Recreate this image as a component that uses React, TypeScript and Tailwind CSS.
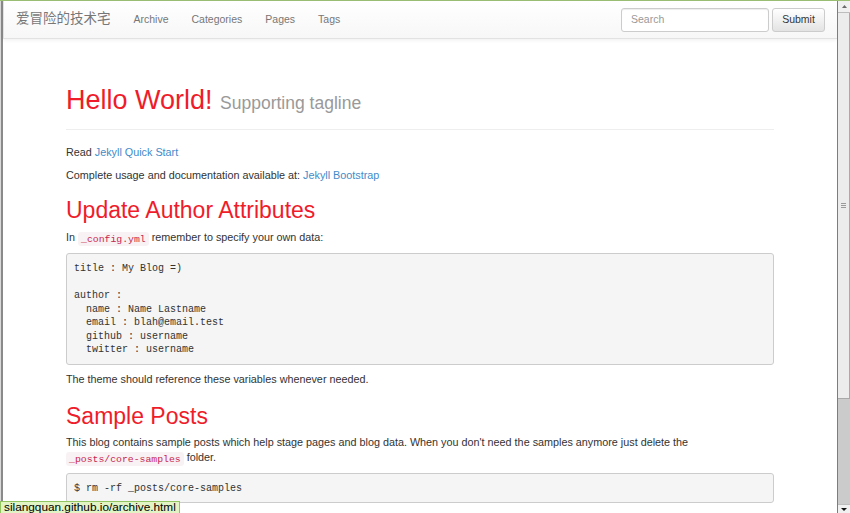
export default function App() {
  const mono = "font-['Liberation_Mono','DejaVu_Sans_Mono',monospace]";
  return (
    <div className="relative w-[850px] h-[513px] overflow-hidden bg-white flex flex-col font-['Liberation_Sans',Arial,sans-serif]">
      <div className="h-[1px] shrink-0 bg-[#9cc174]" />
      <div className="flex flex-1 min-h-0">
        <div className="w-[3px] shrink-0 bg-[#8a8a8a] border-l border-[#d9d9d9]" />
        <div className="flex-1 min-w-0 flex flex-col">
          <nav className="h-[38px] shrink-0 flex items-center pl-[12px] pr-[12px] border-b border-l border-[#e2e2e2] bg-gradient-to-b from-white to-[#f7f7f7] shadow-[0_1px_4px_rgba(0,0,0,0.07)]">
            <div className="flex items-center gap-[23px]">
              <span className="text-[13.5px] text-[#777] font-['Liberation_Sans','Noto_Sans_CJK_SC',sans-serif]">爱冒险的技术宅</span>
              <span className="text-[10.5px] text-[#777]">Archive</span>
              <span className="text-[10.5px] text-[#777]">Categories</span>
              <span className="text-[10.5px] text-[#777]">Pages</span>
              <span className="text-[10.5px] text-[#777]">Tags</span>
            </div>
            <div className="ml-auto flex items-center gap-[3px]">
              <div className="w-[148px] h-[24px] bg-white border border-[#ccc] rounded-[3px] shadow-[inset_0_1px_1px_rgba(0,0,0,0.075)] flex items-center pl-[9px] text-[10.5px] text-[#999]">
                Search
              </div>
              <div className="w-[53px] h-[24px] border border-[#ccc] rounded-[3px] bg-gradient-to-b from-white to-[#e3e3e3] flex items-center justify-center text-[10.5px] text-[#333]">
                Submit
              </div>
            </div>
          </nav>

          <div className="flex-1 min-h-0 pl-[63px]">
            <div className="w-[708px] flex flex-col text-[#333]">
              <div className="mt-[46px] pb-[14px] border-b border-[#eee]">
                <h1 className="h-[30px] leading-[30px] text-[27px] text-[#ef1c2b] whitespace-nowrap">
                  Hello World! <span className="text-[17.5px] leading-none text-[#999]">Supporting tagline</span>
                </h1>
              </div>
              <p className="mt-[15px] text-[10.8px] leading-[15px]">
                Read <span className="text-[#428bca]">Jekyll Quick Start</span>
              </p>
              <p className="mt-[7.5px] text-[10.8px] leading-[15px]">
                Complete usage and documentation available at: <span className="text-[#428bca]">Jekyll Bootstrap</span>
              </p>
              <h2 className="mt-[15px] text-[23px] leading-[24.75px] text-[#ef1c2b]">Update Author Attributes</h2>
              <p className="mt-[8px] text-[10.8px] leading-[15px]">
                In{" "}
                <code className={`${mono} text-[9.8px] leading-none text-[#c7254e] bg-[#f9f2f4] rounded-[3px] px-[3px] py-[1.5px]`}>_config.yml</code>{" "}
                remember to specify your own data:
              </p>
              <pre className={`${mono} mt-[8px] border border-[#ccc] rounded-[3px] bg-[#f5f5f5] pt-[8px] pb-[7px] px-[7px] text-[10px] leading-[13.5px] text-[#333] whitespace-pre`}>
{`title : My Blog =)

author :
  name : Name Lastname
  email : blah@email.test
  github : username
  twitter : username`}
              </pre>
              <p className="mt-[7.5px] text-[10.8px] leading-[15px]">The theme should reference these variables whenever needed.</p>
              <h2 className="mt-[17px] text-[23px] leading-[24.75px] text-[#ef1c2b]">Sample Posts</h2>
              <p className="mt-[6px] text-[10.8px] leading-[15px]">
                This blog contains sample posts which help stage pages and blog data. When you don't need the samples anymore just delete the
                <br />
                <code className={`${mono} text-[9.8px] leading-none text-[#c7254e] bg-[#f9f2f4] rounded-[3px] px-[3px] py-[1.5px]`}>_posts/core-samples</code>{" "}
                folder.
              </p>
              <pre className={`${mono} mt-[7.5px] border border-[#ccc] rounded-[3px] bg-[#f5f5f5] pt-[8px] pb-[7px] px-[7px] text-[10px] leading-[13.5px] text-[#333] whitespace-pre`}>
{`$ rm -rf _posts/core-samples
`}
              </pre>
            </div>
          </div>
        </div>

        <div className="w-[13px] shrink-0 flex flex-col bg-[#cbcbcb] border-l border-[#7d7d7d]">
          <div className="h-[12px] shrink-0 bg-[#f0f0f0] border-b border-[#bdbdbd] flex items-center justify-center">
            <svg width="5" height="3" viewBox="0 0 5 3"><polygon points="2.5,0 5,3 0,3" fill="#6a6a6a" /></svg>
          </div>
          <div className="h-[386px] shrink-0 bg-[#ececec] border-r border-b border-[#a9a9a9] flex items-center justify-center">
            <div className="flex flex-col gap-[1px]">
              <div className="w-[5px] h-[1px] bg-[#9a9a9a]" />
              <div className="w-[5px] h-[1px] bg-[#9a9a9a]" />
              <div className="w-[5px] h-[1px] bg-[#9a9a9a]" />
            </div>
          </div>
          <div className="flex-1" />
          <div className="h-[9px] shrink-0 bg-[#f0f0f0] border-t border-[#bdbdbd] flex items-center justify-center">
            <svg width="6" height="3" viewBox="0 0 6 3"><polygon points="0,0 6,0 3,3" fill="#111" /></svg>
          </div>
        </div>
      </div>

      <div className="absolute left-0 top-[501px] h-[13px] border border-[#93c462] bg-[#e2f3c4] pl-[3px] pr-[3px] text-[11.8px] leading-[11px] text-black whitespace-nowrap">
        silangquan.github.io/archive.html
      </div>
    </div>
  );
}
